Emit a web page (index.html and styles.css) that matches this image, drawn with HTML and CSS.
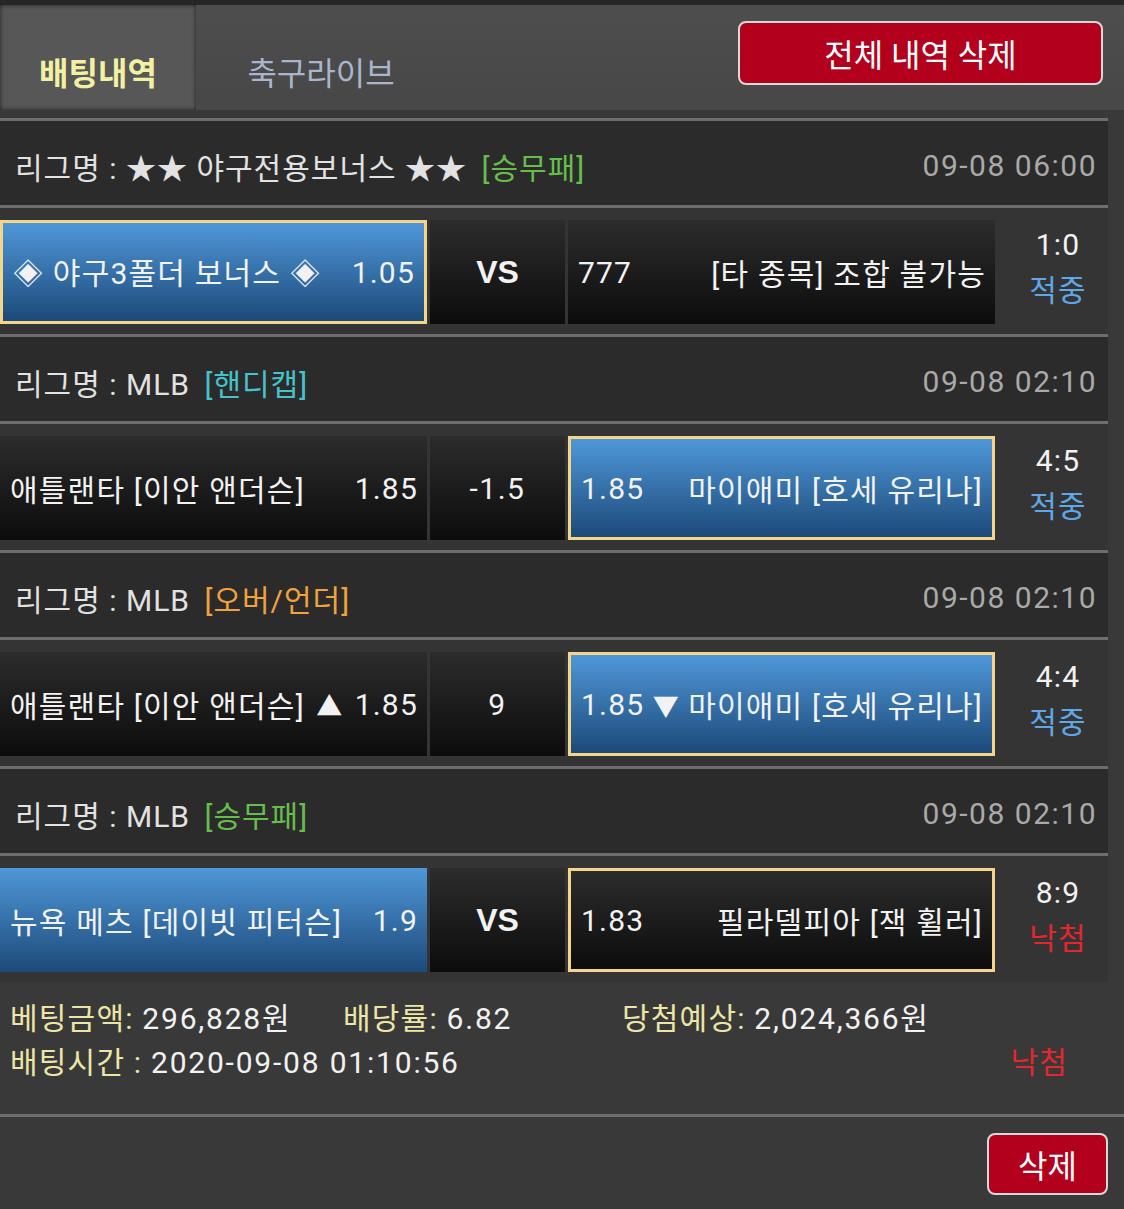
FILE: index.html
```html
<!DOCTYPE html>
<html lang="ko">
<head>
  <meta charset="UTF-8">
  <meta name="viewport" content="width=device-width, initial-scale=1.0">
  <title>배팅내역</title>
  <link rel="stylesheet" href="styles.css">
</head>
<body>
  <div class="header">
    <div class="tab active">배팅내역</div>
    <div class="tab">축구라이브</div>
    <button class="btn-red btn-all">전체 내역 삭제</button>
  </div>

  <div class="list">
    <!-- 1 -->
    <div class="league">
      <span>리그명 : ★★ 야구전용보너스 ★★ <span class="tag green">[승무패]</span></span>
      <span class="date">09-08 06:00</span>
    </div>
    <div class="match">
      <div class="cell team blue pick"><span>◈ 야구3폴더 보너스 ◈</span><span>1.05</span></div>
      <div class="cell mid"><b>VS</b></div>
      <div class="cell team"><span>777</span><span>[타 종목] 조합 불가능</span></div>
      <div class="result"><span>1:0</span><span class="hit">적중</span></div>
    </div>

    <!-- 2 -->
    <div class="league">
      <span>리그명 : MLB <span class="tag cyan">[핸디캡]</span></span>
      <span class="date">09-08 02:10</span>
    </div>
    <div class="match">
      <div class="cell team"><span>애틀랜타 [이안 앤더슨]</span><span>1.85</span></div>
      <div class="cell mid">-1.5</div>
      <div class="cell team blue pick"><span>1.85</span><span>마이애미 [호세 유리나]</span></div>
      <div class="result"><span>4:5</span><span class="hit">적중</span></div>
    </div>

    <!-- 3 -->
    <div class="league">
      <span>리그명 : MLB <span class="tag orange">[오버/언더]</span></span>
      <span class="date">09-08 02:10</span>
    </div>
    <div class="match">
      <div class="cell team"><span>애틀랜타 [이안 앤더슨]</span><span class="arrow">▲</span><span>1.85</span></div>
      <div class="cell mid">9</div>
      <div class="cell team blue pick"><span>1.85</span><span class="arrow">▼</span><span>마이애미 [호세 유리나]</span></div>
      <div class="result"><span>4:4</span><span class="hit">적중</span></div>
    </div>

    <!-- 4 -->
    <div class="league">
      <span>리그명 : MLB <span class="tag green">[승무패]</span></span>
      <span class="date">09-08 02:10</span>
    </div>
    <div class="match">
      <div class="cell team blue"><span>뉴욕 메츠 [데이빗 피터슨]</span><span>1.9</span></div>
      <div class="cell mid"><b>VS</b></div>
      <div class="cell team pick"><span>1.83</span><span>필라델피아 [잭 휠러]</span></div>
      <div class="result"><span>8:9</span><span class="miss">낙첨</span></div>
    </div>
  </div>

  <div class="info">
    <div class="info-row">
      <span class="amount"><i>베팅금액:</i> <em>296,828원</em></span>
      <span class="rate"><i>배당률:</i> <em>6.82</em></span>
      <span><i>당첨예상:</i> <em>2,024,366원</em></span>
    </div>
    <div class="info-row">
      <span><i>배팅시간 :</i> <em>2020-09-08 01:10:56</em></span>
      <span class="miss state">낙첨</span>
    </div>
  </div>

  <div class="footer">
    <button class="btn-red btn-del">삭제</button>
  </div>
</body>
</html>
```

FILE: styles.css
```css
*{
  margin: 0;
  padding: 0;
  box-sizing: border-box;
}

body{
  background: #393939;
  color: #f2f2f2;
  font-family: Roboto, "Noto Sans CJK KR", sans-serif;
  font-size: 30px;
  letter-spacing: 1.2px;
  width: 1124px;
}

/* 상단 탭 */
.header{
  display: flex;
  height: 110px;
  border-top: 5px solid #262626;
  background: linear-gradient(#4e4e4e, #474747);
  letter-spacing: 0;
}

.header .tab{
  display: flex;
  align-items: flex-end;
  justify-content: center;
  width: 250px;
  padding-bottom: 16px;
  font-size: 32px;
  color: #a9b5ca;
}

.header .tab.active{
  width: 196px;
  background: #575757;
  box-shadow: inset 0 0 4px #1e1e1e;
  color: #f2f0a2;
  font-weight: bold;
}

.btn-red{
  background: #b3001c;
  border: 2px solid #d9d9d9;
  border-radius: 8px;
  color: #fff;
  font-family: inherit;
  font-size: 32px;
  letter-spacing: 0;
}

.btn-all{
  width: 365px;
  height: 64px;
  margin: 16px 21px 0 auto;
}

/* 경기 목록 */
.list{
  width: 1108px;
  margin-top: 8px;
}

.league{
  display: flex;
  justify-content: space-between;
  align-items: center;
  height: 87px;
  padding: 5px 11px 0 15px;
  border-top: 3px solid #6e6e6e;
  background: #2b2b2b;
  color: #e2e2e2;
  letter-spacing: 1px;
}

.league .date{
  color: #a9a9a9;
  letter-spacing: 1.5px;
}

.tag{
  margin-left: 6px;
}
.tag.green{ color: #67bd4c; }
.tag.cyan{ color: #45c3ca; }
.tag.orange{ color: #f2a23a; }

.match{
  display: flex;
  gap: 3px;
  height: 129px;
  padding: 12px 0 10px;
  border-top: 3px solid #6e6e6e;
  background: #343434;
}

.cell{
  display: flex;
  align-items: center;
  background: linear-gradient(#2c2c2c, #0c0c0c);
}

.cell.team{
  width: 427px;
  justify-content: space-between;
  padding: 0 9px 0 10px;
}

.cell.mid{
  width: 135px;
  justify-content: center;
  letter-spacing: 1.5px;
}

.cell.mid b{
  font-family: "Liberation Sans", sans-serif;
  font-size: 32px;
  letter-spacing: 0;
}

.cell.blue{
  background: linear-gradient(#4f97d8, #1c4a79);
}

.cell.pick{
  border: 3px solid #f3d68a;
}

.cell .arrow{
  font-size: 26px;
}

.result{
  flex: 1;
  display: flex;
  flex-direction: column;
  align-items: center;
  justify-content: center;
  line-height: 46px;
  padding: 0 0 8px 10px;
}

.hit{ color: #5fa7e6; }
.miss{ color: #e4262e; }

/* 베팅 정보 */
.info{
  height: 132px;
  padding: 15px 0 0 10px;
}

.info-row{
  display: flex;
  line-height: 44px;
}

.info i{
  font-style: normal;
  color: #ece6a6;
}

.info em{
  font-style: normal;
  letter-spacing: 1.8px;
}

.info .amount{ width: 333px; }
.info .rate{ width: 279px; }

.info .state{
  margin: 0 56px 0 auto;
}

.footer{
  display: flex;
  justify-content: flex-end;
  border-top: 3px solid #6e6e6e;
  padding: 16px 16px 0 0;
}

.btn-del{
  width: 121px;
  height: 62px;
}
```
